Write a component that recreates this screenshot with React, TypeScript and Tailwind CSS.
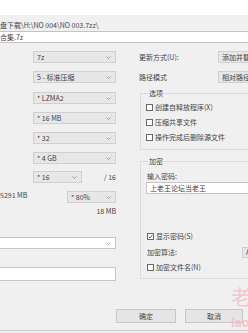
import React from "react";

function Chevron() {
  return (
    <svg width="5" height="3" viewBox="0 0 5 3" className="shrink-0">
      <path d="M0.5 0.5 L2.5 2.5 L4.5 0.5" fill="none" stroke="#8a8a8a" strokeWidth="0.8" />
    </svg>
  );
}

function Combo({ text, className, white }: { text: string; className: string; white?: boolean }) {
  return (
    <div
      className={
        (white ? "bg-white border-[#c6c6c6] " : "bg-[#e7e7e7] border-[#d0d0d0] ") +
        "flex items-center border pl-[3px] pr-[4px] overflow-hidden " +
        className
      }
    >
      <span className="flex-1 whitespace-nowrap leading-[10px]">{text}</span>
      <Chevron />
    </div>
  );
}

function Check({ label, checked }: { label: string; checked?: boolean }) {
  return (
    <div className="flex items-center gap-[2px] h-[10px]">
      <div className="w-[7px] h-[7px] border border-[#6a6a6a] bg-white flex items-center justify-center shrink-0">
        {checked && (
          <svg width="5" height="5" viewBox="0 0 5 5">
            <path d="M0.6 2.6 L2 4 L4.5 0.8" fill="none" stroke="#444" strokeWidth="0.8" />
          </svg>
        )}
      </div>
      <span className="whitespace-nowrap leading-[10px]">{label}</span>
    </div>
  );
}

export default function App() {
  return (
    <div className="relative w-[248px] h-[333px] overflow-hidden bg-[#f0f0f0] text-[7px] text-[#444] font-['Noto_Sans_CJK_SC','Noto_Sans',sans-serif]">
      <div className="h-[15px] bg-white" />
      <div className="h-[16px] pt-[5px] leading-[10px] whitespace-nowrap">盘下载\H:\NO 004\NO 003.7zz\</div>
      <div className="h-[12px] bg-white border-y border-[#c4c4c4] flex items-center whitespace-nowrap leading-[10px]">
        合集.7z
      </div>

      <div className="flex">
        {/* left column */}
        <div className="w-[116px] shrink-0 flex flex-col">
          <Combo text="7z" className="ml-[33px] w-[83px] h-[12px] mt-[8px]" />
          <Combo text="5 - 标准压缩" className="ml-[33px] w-[83px] h-[12px] mt-[8px]" />
          <Combo text="* LZMA2" className="ml-[33px] w-[83px] h-[12px] mt-[9px]" />
          <Combo text="* 16 MB" className="ml-[33px] w-[83px] h-[12px] mt-[8px]" />
          <Combo text="* 32" className="ml-[33px] w-[83px] h-[12px] mt-[8px]" />
          <Combo text="* 4 GB" className="ml-[33px] w-[83px] h-[12px] mt-[8px]" />
          <div className="flex items-center mt-[7px] h-[12px]">
            <Combo text="* 16" className="ml-[33px] w-[49px] h-[12px]" />
            <span className="ml-auto leading-[10px]">/ 16</span>
          </div>
          <div className="flex items-center mt-[8px] h-[12px]">
            <span className="leading-[10px] whitespace-nowrap -mt-[5px]">5291 MB</span>
            <Combo text="* 80%" className="ml-auto w-[49px] h-[12px]" />
          </div>
          <div className="flex justify-end mt-[3px] h-[10px] leading-[10px]">18 MB</div>
          <Combo text="" white className="w-[116px] h-[12px] mt-[21px] border-l-0" />
          <div className="w-[116px] h-[14px] mt-[18px] bg-white border border-l-0 border-[#c6c6c6]" />
        </div>

        {/* right column */}
        <div className="ml-[23px] flex-1 flex flex-col">
          <div className="flex items-center h-[12px] mt-[8px]">
            <span className="w-[79px] shrink-0 whitespace-nowrap leading-[10px]">更新方式(U):</span>
            <Combo text="添加并替换文件" className="w-[70px] h-[12px] shrink-0 pl-[2px]" />
          </div>
          <div className="flex items-center h-[12px] mt-[8px]">
            <span className="w-[79px] shrink-0 whitespace-nowrap leading-[10px]">路径模式</span>
            <Combo text="相对路径" className="w-[70px] h-[12px] shrink-0 pl-[2px]" />
          </div>

          <fieldset className="ml-[1px] mt-[5px] w-[130px] border border-[#dcdcdc] pl-[5px] pb-[7px]">
            <legend className="ml-[2px] px-[1px] leading-[10px]">选项</legend>
            <div className="flex flex-col gap-[5px] mt-[4px]">
              <Check label="创建自释放程序(X)" />
              <Check label="压缩共享文件" />
              <Check label="操作完成后删除源文件" />
            </div>
          </fieldset>

          <fieldset className="ml-[1px] mt-[6px] w-[130px] border border-[#dcdcdc] pl-[6px] pb-[6px]">
            <legend className="ml-[1px] px-[1px] leading-[10px]">加密</legend>
            <div className="mt-[5px] h-[10px] leading-[10px]">输入密码:</div>
            <div className="-ml-[1px] mt-[1px] h-[12px] bg-white border border-r-0 border-[#c6c6c6] flex items-center pl-[3px] whitespace-nowrap leading-[10px]">
              上老王论坛当老王
            </div>
            <div className="mt-[37px]">
              <Check label="显示密码(S)" checked />
            </div>
            <div className="flex items-center h-[10px] mt-[6px]">
              <span className="w-[95px] shrink-0 leading-[10px]">加密算法:</span>
              <Combo text="AES-256" className="w-[40px] h-[11px] shrink-0 pl-[1px]" />
            </div>
            <div className="mt-[5px]">
              <Check label="加密文件名(N)" />
            </div>
          </fieldset>
        </div>
      </div>

      <div className="flex mt-[28px] pl-[116px] gap-[9px]">
        <div className="w-[60px] h-[14px] bg-[#e5e5e5] border border-[#c6c6c6] flex items-center justify-center leading-[10px]">确定</div>
        <div className="w-[58px] h-[14px] bg-[#e5e5e5] border border-[#c6c6c6] flex items-center justify-center leading-[10px]">取消</div>
      </div>
      <div className="mt-[7px] h-[1px] bg-[#cfcfcf]" />

      <div className="absolute left-[231px] top-[286px] text-[20px] leading-[22px] text-[#f6bcc6] opacity-80 pointer-events-none">老</div>
      <div className="absolute left-[231px] top-[315px] text-[12px] leading-[14px] font-bold text-[#f6bcc6] opacity-80 pointer-events-none">lao</div>
    </div>
  );
}
